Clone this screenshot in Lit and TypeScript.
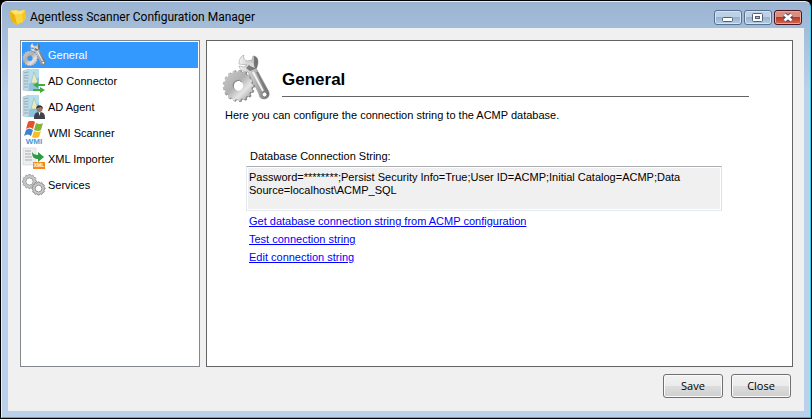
import { LitElement, css, html, svg } from "lit";
import { customElement, state } from "lit/decorators.js";
import { classMap } from "lit/directives/class-map.js";

function gearPath(cx: number, cy: number, outer: number, inner: number, hole: number, teeth: number): string {
  const at = (r: number, a: number) => `${(cx + r * Math.cos(a)).toFixed(2)} ${(cy + r * Math.sin(a)).toFixed(2)}`;
  const step = (Math.PI * 2) / teeth;
  const points: string[] = [];
  for (let i = 0; i < teeth; i++) {
    const a = i * step;
    points.push(at(inner, a - step * 0.32), at(outer, a - step * 0.2), at(outer, a + step * 0.2), at(inner, a + step * 0.32));
  }
  return `M${points.join("L")}Z M${cx - hole} ${cy}a${hole} ${hole} 0 1 0 ${hole * 2} 0a${hole} ${hole} 0 1 0 ${-hole * 2} 0Z`;
}

const gradients = svg`<defs>
  <linearGradient id="metal" x1="0" y1="0" x2="1" y2="1">
    <stop offset="0" stop-color="#cdcdcd"></stop><stop offset=".45" stop-color="#b0b0b0"></stop>
    <stop offset=".68" stop-color="#e6e4e4"></stop><stop offset="1" stop-color="#8d8d8d"></stop>
  </linearGradient>
  <linearGradient id="steel" x1="0" y1="0" x2="1" y2="0">
    <stop offset="0" stop-color="#f4f4f4"></stop><stop offset=".5" stop-color="#bdbdbd"></stop>
    <stop offset="1" stop-color="#6c6c6c"></stop>
  </linearGradient>
</defs>`;

const toolsIcon = html`<svg class="fill" viewBox="0 0 48 48" aria-hidden="true">${gradients}
  <path d=${gearPath(17, 31, 16, 14.2, 5.2, 17)} fill="#858585" fill-rule="evenodd"></path>
  <path d=${gearPath(16, 30.6, 15.4, 13.8, 5.2, 17)} fill="url(#metal)" fill-rule="evenodd"></path>
  <path d="M11 31a5.2 5.2 0 0 1 9-4" fill="none" stroke="#8a8a8a" stroke-width="1"></path>
  <path d="M22 0c-1 3 0 5 3 6l5-1 1-4c3 0 5 2 5 6 0 3-1 5-2 6l12 22c3 5 0 9-4 9-3 0-5-2-5-5L26 17c-5 0-8-2-9-6l5 1 3-2-8-1c0-5 2-8 5-9Z" fill="url(#steel)" stroke="#8f8f8f" stroke-width=".5"></path>
  <path d="M32 1c3 1 4 3 4 6l-1 6-7 3-4-3 3-3 5 1Z" fill="#4f4f4f" opacity=".65"></path>
  <path d="M26 7l5 1 2 5-5-2Z" fill="#d9d9d9"></path>
  <path d="M31 17l10 19" stroke="#f2f2f2" stroke-width="2"></path>
  <path d="M35 17l9 18" stroke="#777" stroke-width="1.600"></path>
  <circle cx="42.500" cy="39.500" r="2.500" fill="#fff" stroke="#7b7b7b"></circle>
</svg>`;

const server = svg`
  <path d="M1 2l6-2v22l-6-1Z" fill="#c3dbe6" stroke="#93b2c2" stroke-width=".5"></path>
  <path d="M7 0h10v22H7Z" fill="#b4def0"></path>
  <path d="M7 15l10-7v14H7Z" fill="#8cc3e0"></path>
  <path d="M2 4l4-1M2 7l4-1M2 9h4M2 12h4M2 15h4M2 18h4" stroke="#7f9dad" stroke-width=".8"></path>
  <path d="M12 3l4 11h-7Z" fill="#e9eac0" stroke="#93ae9f" stroke-width=".5"></path>`;

const connectorIcon = html`<svg class="fill" viewBox="0 0 24 24" aria-hidden="true">${server}
  <path d="M11 16l5-3v2h7v2h-7v2Z" fill="#41ae3b"></path>
  <path d="M23 21l-5-3v2h-7v2h7v2Z" fill="#41ae3b"></path>
</svg>`;

const agentIcon = html`<svg class="fill" viewBox="0 0 24 24" aria-hidden="true">${server}
  <path d="M12 24c0-5 1-6 4-7h3c3 1 4 2 4 7Z" fill="#3f4249"></path>
  <circle cx="17.500" cy="14" r="3" fill="#9b7769"></circle>
  <path d="M14 14c0-5 7-5 7 0l-2-2-4 1Z" fill="#33302f"></path>
  <path d="M16.500 17h2l-1 4Z" fill="#f5f5f5"></path>
</svg>`;

const wmiIcon = html`<svg class="fill" viewBox="0 0 24 24" aria-hidden="true">
  <path d="M6 1q4-3 7 0l-2 7q-3-3-7 0Z" fill="#e5532b"></path>
  <path d="M14 2q4 2 7 0l-2 7q-3 2-7 0Z" fill="#7fb63a"></path>
  <path d="M4 9q3-3 7 0l-2 6q-3-3-7 0Z" fill="#3b83d1"></path>
  <path d="M12 10q3 2 7 0l-2 6q-4 2-7 0Z" fill="#f8bd2d"></path>
  <text x="12" y="23" class="wmi" text-anchor="middle">WMI</text>
</svg>`;

const xmlIcon = html`<svg class="fill" viewBox="0 0 24 24" aria-hidden="true">
  <path d="M1 1h13v17H1Z" fill="#eceeef" stroke="#cfd3d5" stroke-width=".6"></path>
  <path d="M3 4h6M3 7h6M3 10h7M3 13h7" stroke="#a8adaf" stroke-width="1"></path>
  <path d="M10 5c1 2 3 3 6 3V5l6 5-6 5v-3c-4 0-6-2-6-7Z" fill="#2c9c42"></path>
  <path d="M11 15h12v7H11Z" fill="#f58a1f"></path>
  <text x="17" y="20" class="xml" text-anchor="middle">XML</text>
</svg>`;

const servicesIcon = html`<svg class="fill" viewBox="0 0 24 24" aria-hidden="true">
  <path d=${gearPath(7.5, 8.5, 7, 6.2, 3.6, 12)} fill="#c8c8c8" stroke="#8f8f8f" stroke-width=".8" fill-rule="evenodd"></path>
  <path d=${gearPath(16.5, 15.5, 6.6, 5.8, 3.4, 12)} fill="#c8c8c8" stroke="#7d7d7d" stroke-width=".8" fill-rule="evenodd"></path>
</svg>`;

const boxIcon = html`<svg class="fill" viewBox="0 0 16 16" aria-hidden="true">
  <path d="M0 2l6-1 3 1 6-1 1 8-3 4-6 3-6-4Z" fill="#f6c71f"></path>
  <path d="M0 2l5 4 7-1 3-4-6 1-3-1Z" fill="#fbe46f"></path>
  <path d="M5 6l2 9-6-3L0 2Z" fill="#eeb20f"></path>
  <path d="M5 6l7-1 1 8-6 2Z" fill="#fad63e"></path>
</svg>`;

const pages = [
  { name: "General", icon: toolsIcon },
  { name: "AD Connector", icon: connectorIcon },
  { name: "AD Agent", icon: agentIcon },
  { name: "WMI Scanner", icon: wmiIcon },
  { name: "XML Importer", icon: xmlIcon },
  { name: "Services", icon: servicesIcon },
];

@customElement("app-root")
export class AppRoot extends LitElement {
  @state() private selected = 0;

  static styles = css`
    :host {
      display: block;
      font: 11px/13px "Liberation Sans", Arial, sans-serif;
      color: #000;
    }
    * { box-sizing: border-box; }
    .fill { display: block; width: 100%; height: 100%; }
    .desktop { background: #000; min-height: 100vh; display: flex; padding: 1px; }
    .window {
      flex: 1;
      display: flex;
      flex-direction: column;
      padding: 0 6px 6px;
      border: 1px solid #e4eefa;
      border-right-color: #35cdeb;
      border-bottom-color: #35b9d6;
      border-radius: 6px 6px 0 0;
      background: linear-gradient(#9ab4d2, #b9d1ea 90px);
    }
    .titlebar { display: flex; align-items: center; height: 26px; padding: 4px 0 0 2px; gap: 4px; }
    .logo { width: 16px; height: 16px; }
    .title { flex: 1; margin: 0; font: 12px/16px Roboto, "Open Sans", sans-serif; }
    .captions { display: flex; gap: 2px; padding: 0 2px 0 0; }
    .caption {
      width: 28px;
      height: 15px;
      padding: 0;
      border: 1px solid #56708f;
      border-radius: 3px;
      box-shadow: inset 0 0 0 1px #d5e3f2;
      background: linear-gradient(#bdd0e6 50%, #98b3d1 50%, #b5cde6);
    }
    .caption.close {
      border-color: #4b1420;
      box-shadow: inset 0 0 0 1px #e4a99f;
      background: linear-gradient(#d98d7f 50%, #b83a26 50%, #cf6a50);
    }
    .client {
      flex: 1;
      display: flex;
      flex-direction: column;
      gap: 7px;
      padding: 12px 11px 13px 12px;
      background: #f0f0f0;
    }
    .body { flex: 1; display: grid; grid-template-columns: 180px 1fr; gap: 6px; }
    .list { padding: 1px; border: 1px solid #828790; background: #fff; }
    .item {
      display: flex;
      align-items: center;
      gap: 2px;
      width: 100%;
      height: 26px;
      padding: 0;
      border: 0;
      background: none;
      color: inherit;
      font: inherit;
      text-align: left;
    }
    .item.selected { background: #3399ff; color: #fff; }
    .icon { width: 24px; height: 24px; }
    .wmi { font: bold 8px "Liberation Sans", Arial, sans-serif; fill: #4a9ad8; }
    .xml { font: bold 5px "Liberation Sans", Arial, sans-serif; fill: #fff; }
    .panel { padding: 14px 15px; border: 1px solid #646464; background: #fff; }
    .head { display: flex; gap: 12px; padding-right: 28px; }
    .bigicon { width: 48px; height: 48px; }
    .heading {
      flex: 1;
      height: 42px;
      margin: 0;
      padding-top: 14px;
      border-bottom: 1px solid #646464;
      font: bold 17px/22px "Liberation Sans", Arial, sans-serif;
    }
    .intro { margin: 6px 0 28px 3px; }
    .settings { display: flex; flex-direction: column; padding: 0 55px 0 24px; }
    .label { padding-left: 4px; }
    .connection {
      display: block;
      height: 45px;
      margin: 3px 0 4px;
      padding: 4px 2px;
      border: 1px solid #e3e9ef;
      border-top-color: #abadb3;
      border-right-color: #dbdfe6;
      background: #f0f0f0;
      box-shadow: inset 0 0 0 1px #fff;
      color: inherit;
      font: inherit;
      resize: none;
      overflow: hidden;
      outline: none;
    }
    .links { display: flex; flex-direction: column; align-items: flex-start; gap: 5px; padding-left: 3px; }
    .link { color: #0000ff; }
    .actions { display: flex; justify-content: flex-end; gap: 8px; padding-right: 2px; }
    .button {
      width: 60px;
      height: 24px;
      padding: 0;
      border: 1px solid #707070;
      border-radius: 3px;
      box-shadow: inset 0 0 0 1px #fbfbfb;
      background: linear-gradient(#f2f2f2, #ebebeb 50%, #dddddd 50%, #cfcfcf);
      color: inherit;
      font: 11px/16px "Open Sans", "Noto Sans", sans-serif;
    }
  `;

  render() {
    return html`
      <div class="desktop">
        <div class="window">
          <header class="titlebar">
            <span class="logo">${boxIcon}</span>
            <h1 class="title">Agentless Scanner Configuration Manager</h1>
            <div class="captions">
              <button class="caption" aria-label="Minimize">
                <svg class="fill" viewBox="0 0 26 13"><rect x="7.500" y="6.500" width="10" height="4" rx="1" fill="#fff" stroke="#53617a"></rect></svg>
              </button>
              <button class="caption" aria-label="Maximize">
                <svg class="fill" viewBox="0 0 26 13">
                  <rect x="7.500" y="2.500" width="10" height="8" rx="1" fill="#fff" stroke="#53617a"></rect>
                  <rect x="10.500" y="5.500" width="4" height="2" fill="#9fb9d6" stroke="#53617a"></rect>
                </svg>
              </button>
              <button class="caption close" aria-label="Close window">
                <svg class="fill" viewBox="0 0 26 13">
                  <path d="M9.500 3.500l7 6M16.500 3.500l-7 6" stroke="#59415a" stroke-width="4.400"></path>
                  <path d="M9.500 3.500l7 6M16.500 3.500l-7 6" stroke="#fff" stroke-width="2.800"></path>
                </svg>
              </button>
            </div>
          </header>
          <div class="client">
            <div class="body">
              <nav class="list">
                ${pages.map(
                  (page, i) => html`<button
                    class=${classMap({ item: true, selected: i === this.selected })}
                    @click=${() => (this.selected = i)}
                  ><span class="icon">${page.icon}</span>${page.name}</button>`,
                )}
              </nav>
              <main class="panel">
                <div class="head">
                  <span class="bigicon">${toolsIcon}</span>
                  <h2 class="heading">General</h2>
                </div>
                <p class="intro">Here you can configure the connection string to the ACMP database.</p>
                <div class="settings">
                  <label class="label" for="connection">Database Connection String:</label>
                  <textarea class="connection" id="connection" readonly spellcheck="false" .value=${"Password=********;Persist Security Info=True;User ID=ACMP;Initial Catalog=ACMP;Data Source=localhost\\ACMP_SQL"}></textarea>
                  <div class="links">
                    <a class="link" href="#fetch">Get database connection string from ACMP configuration</a>
                    <a class="link" href="#test">Test connection string</a>
                    <a class="link" href="#edit">Edit connection string</a>
                  </div>
                </div>
              </main>
            </div>
            <div class="actions">
              <button class="button">Save</button>
              <button class="button">Close</button>
            </div>
          </div>
        </div>
      </div>
    `;
  }
}
